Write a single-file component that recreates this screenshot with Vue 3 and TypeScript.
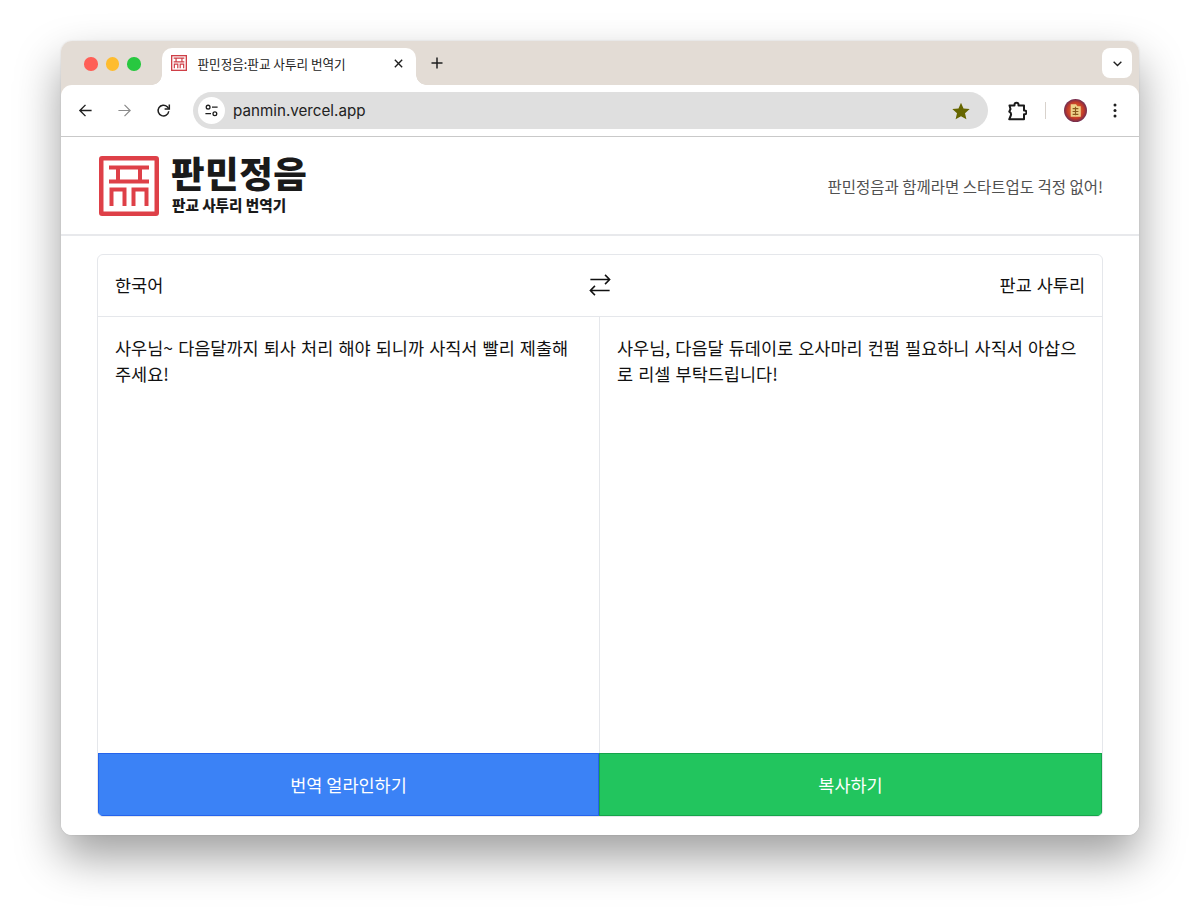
<script setup lang="ts">
const source = '사우님~ 다음달까지 퇴사 처리 해야 되니까 사직서 빨리 제출해 주세요!'
const target = '사우님, 다음달 듀데이로 오사마리 컨펌 필요하니 사직서 아삽으로 리셀 부탁드립니다!'
</script>

<template>
  <div class="stage">
    <div class="window">
      <div class="tabstrip">
        <div class="lights">
          <span class="light l-red"></span>
          <span class="light l-yellow"></span>
          <span class="light l-green"></span>
        </div>
        <div class="tab">
          <svg class="favicon" viewBox="0 0 60 60" aria-hidden="true">
            <rect x="2.500" y="2.500" width="55" height="55" fill="#fff" stroke="#cf3f47" stroke-width="5" />
            <path d="M10 12h40M10 26h40M19 12v14M41 12v14M12.500 50V34H25.500V50M34.500 50V34H47.500V50" fill="none" stroke="#cf3f47" stroke-width="4.500" />
          </svg>
          <span class="tab-title">판민정음:판교 사투리 번역기</span>
          <svg class="tab-close" viewBox="0 0 12 12" aria-hidden="true">
            <path d="M2 2l8 8M10 2l-8 8" stroke="#1f1f1f" stroke-width="1.500" fill="none" />
          </svg>
        </div>
        <svg class="new-tab" viewBox="0 0 12 12" aria-hidden="true">
          <path d="M6 0.500v11M0.500 6h11" stroke="#1f1f1f" stroke-width="1.500" fill="none" />
        </svg>
        <div class="tab-menu">
          <svg viewBox="0 0 12 12" aria-hidden="true">
            <path d="M1.800 4L6 8.200 10.200 4" stroke="#1f1f1f" stroke-width="1.500" fill="none" />
          </svg>
        </div>
      </div>

      <div class="toolbar">
        <svg class="nav" viewBox="0 0 16 16" aria-hidden="true">
          <path d="M14.500 8H2M8 2L2 8l6 6" stroke="#1f1f1f" stroke-width="1.500" fill="none" />
        </svg>
        <svg class="nav" viewBox="0 0 16 16" aria-hidden="true">
          <path d="M1.500 8H14M8 2l6 6-6 6" stroke="#8b8b8b" stroke-width="1.300" fill="none" />
        </svg>
        <svg class="nav" viewBox="0 0 16 16" aria-hidden="true">
          <path d="M13.600 8.800A5.700 5.700 0 1 1 12 4.100L13.600 6" stroke="#1f1f1f" stroke-width="1.600" fill="none" />
          <path d="M14.200 1.500v5H9.200" fill="none" stroke="#1f1f1f" stroke-width="1.600" />
        </svg>
        <div class="omnibox">
          <span class="site-chip">
            <svg viewBox="0 0 16 16" aria-hidden="true">
              <circle cx="4.400" cy="4.400" r="2" fill="none" stroke="#1f1f1f" stroke-width="1.400" />
              <path d="M8.500 4.400h6M1.500 11.400h6" stroke="#1f1f1f" stroke-width="1.400" fill="none" />
              <circle cx="11.600" cy="11.400" r="2" fill="none" stroke="#1f1f1f" stroke-width="1.400" />
            </svg>
          </span>
          <span class="url">panmin.vercel.app</span>
          <svg class="star" viewBox="0 0 18 18" aria-hidden="true">
            <path d="M9 .8l2.500 5.700 6.200.6-4.700 4.100 1.400 6.100L9 14.200l-5.400 3.100L5 11.200.3 7.100l6.200-.6z" fill="#666600" />
          </svg>
        </div>
        <svg class="ext" viewBox="0 0 20 20" aria-hidden="true">
          <path d="M2.500 4.500h5V3.800a2 2 0 0 1 4 0v.7h5.500v5h.6a1.900 1.900 0 0 1 0 3.800H17v5H2.200l1.600-3.800c.6-1.500.1-2.900-1.500-3.800L3.500 8z" fill="none" stroke="#1a1a1a" stroke-width="2" stroke-linejoin="round" />
        </svg>
        <span class="tool-sep"></span>
        <span class="avatar">
          <svg viewBox="0 0 24 24" aria-hidden="true">
            <defs>
              <radialGradient id="avatarGlow" cx="0.500" cy="0.500" r="0.550">
                <stop offset="0" stop-color="#ee8a2c" />
                <stop offset="0.650" stop-color="#c23a2a" />
                <stop offset="1" stop-color="#54295e" />
              </radialGradient>
            </defs>
            <circle cx="12" cy="12" r="12" fill="url(#avatarGlow)" />
            <path d="M7 5.500h5.500L14 7.500h3.500V18.500H7z" fill="#eed28a" />
            <path d="M9 10h6M9 13h6M9 16h6M12 8v9" stroke="#8a5a1e" stroke-width="1.200" fill="none" />
          </svg>
        </span>
        <svg class="dots" viewBox="0 0 4 16" aria-hidden="true">
          <circle cx="2" cy="2.200" r="1.600" fill="#1f1f1f" />
          <circle cx="2" cy="8" r="1.600" fill="#1f1f1f" />
          <circle cx="2" cy="13.800" r="1.600" fill="#1f1f1f" />
        </svg>
      </div>

      <div class="page">
        <header class="site-header">
          <div class="brand">
            <svg class="logo" viewBox="0 0 60 60" aria-hidden="true">
              <rect x="2.250" y="2.250" width="55.500" height="55.500" rx="0.800" fill="#fff" stroke="#de4048" stroke-width="4.500" />
              <path d="M10 11.500h40M10 25.500h40M19 11.500v14M41 11.500v14M12.500 50V33.500H25.500V50M34.500 50V33.500H47.500V50" fill="none" stroke="#de4048" stroke-width="4" />
            </svg>
            <div class="brand-text">
              <div class="brand-name">판민정음</div>
              <div class="brand-sub">판교 사투리 번역기</div>
            </div>
          </div>
          <p class="tagline">판민정음과 함께라면 스타트업도 걱정 없어!</p>
        </header>

        <main class="content">
          <section class="card">
            <div class="lang-row">
              <span>한국어</span>
              <svg class="swap" viewBox="0 0 24 24" aria-hidden="true">
                <path d="M1.500 7h21M17.500 2l5 5-5 5M22.500 19H1.500M6.500 14l-5 5 5 5" fill="none" stroke="#111" stroke-width="1.700" transform="translate(0 -1)" />
              </svg>
              <span class="lang-right">판교 사투리</span>
            </div>
            <div class="panes">
              <div class="pane">{{ source }}</div>
              <div class="pane">{{ target }}</div>
            </div>
            <div class="actions">
              <button class="action blue" type="button">번역 얼라인하기</button>
              <button class="action green" type="button">복사하기</button>
            </div>
          </section>
        </main>
      </div>
    </div>
  </div>
</template>

<style>
html, body { margin: 0; background: #fff; }
</style>

<style scoped>
.stage {
  width: 1200px;
  height: 916px;
  padding: 41px 61px 81px;
  box-sizing: border-box;
  overflow: hidden;
  font-family: "Inter", "Noto Sans CJK KR", sans-serif;
  color: #111;
}
.window {
  height: 794px;
  border-radius: 11px;
  background: #fff;
  overflow: hidden;
  display: flex;
  flex-direction: column;
  box-shadow: 0 0 2px rgba(0,0,0,.12), 0 22px 45px rgba(0,0,0,.38);
}
.tabstrip {
  height: 55px;
  padding-bottom: 11px;
  margin-bottom: -11px;
  box-sizing: border-box;
  flex: none;
  background: #e3dcd5;
  display: flex;
  align-items: flex-end;
  position: relative;
}
.lights { display: flex; gap: 8px; margin: 0 21px 0 23px; align-self: center; padding-top: 2px; }
.light { width: 13.500px; height: 13.500px; border-radius: 50%; }
.l-red { background: #ff5f57; }
.l-yellow { background: #febc2e; }
.l-green { background: #28c840; }
.tab {
  width: 254px;
  height: 37px;
  background: #fff;
  border-radius: 10px 10px 0 0;
  display: flex;
  align-items: center;
  padding: 0 10px 7px 9px;
  box-sizing: border-box;
  position: relative;
  z-index: 2;
}
.tab::before,
.tab::after {
  content: "";
  position: absolute;
  bottom: 0;
  width: 10px;
  height: 10px;
}
.tab::before {
  left: -10px;
  background: radial-gradient(circle at 0 0, transparent 9.500px, #fff 10px);
}
.tab::after {
  right: -10px;
  background: radial-gradient(circle at 100% 0, transparent 9.500px, #fff 10px);
}
.favicon { width: 16px; height: 16px; flex: none; }
.tab-title {
  margin-left: 11px;
  font-size: 12.600px;
  font-family: "Noto Sans CJK KR", sans-serif;
  color: #222;
  flex: 1;
  white-space: nowrap;
}
.tab-close { width: 11px; height: 11px; flex: none; margin-right: 2px; }
.new-tab { width: 12px; height: 12px; margin: 0 0 16px 15px; flex: none; }
.tab-menu {
  position: absolute;
  right: 7px;
  top: 7px;
  width: 30px;
  height: 30px;
  background: #fff;
  border-radius: 8px;
  display: flex;
  align-items: center;
  justify-content: center;
}
.tab-menu svg { width: 11px; height: 11px; }
.toolbar {
  height: 51px;
  flex: none;
  background: #fff;
  border-bottom: 1px solid #c9c9c9;
  display: flex;
  align-items: center;
  padding-left: 17px;
  border-radius: 11px 11px 0 0;
  position: relative;
  z-index: 1;
}
.nav { width: 15px; height: 15px; flex: none; margin-right: 24px; }
.omnibox {
  width: 795px;
  height: 37px;
  margin-left: -2px;
  border-radius: 19px;
  background: #dfdfdf;
  display: flex;
  align-items: center;
  padding: 0 18px 0 5px;
  box-sizing: border-box;
  flex: none;
}
.site-chip {
  width: 27px;
  height: 27px;
  background: #fff;
  border-radius: 50%;
  display: flex;
  align-items: center;
  justify-content: center;
  flex: none;
}
.site-chip svg { width: 15px; height: 15px; }
.url { margin-left: 8px; font-size: 15.200px; color: #222; flex: 1; font-family: "Inter", sans-serif; }
.star { width: 18px; height: 18px; flex: none; }
.ext { width: 20px; height: 20px; margin-left: 19px; flex: none; }
.tool-sep { width: 1px; height: 17px; background: #d8d2cc; margin-left: 18px; flex: none; }
.avatar { width: 23px; height: 23px; margin-left: 18px; flex: none; display: block; }
.avatar svg { width: 100%; height: 100%; display: block; }
.dots { width: 4px; height: 15px; margin-left: 26px; flex: none; }
.page { flex: 1; min-height: 0; display: flex; flex-direction: column; background: #fff; }
.site-header {
  height: 97px;
  flex: none;
  border-bottom: 2px solid #e8e9ec;
  display: flex;
  align-items: center;
  justify-content: space-between;
  padding: 0 36px 0 38px;
}
.brand { display: flex; align-items: center; gap: 12px; padding-top: 1px; }
.logo { width: 60px; height: 60px; display: block; flex: none; }
.brand-text { display: flex; flex-direction: column; font-family: "Noto Sans CJK KR", sans-serif; color: #1a1a1a; }
.brand-name { font-size: 36.500px; font-weight: 900; line-height: 40px; letter-spacing: 0.500px; margin-top: -5px; }
.brand-sub { font-size: 14.600px; font-weight: 900; line-height: 18px; margin-top: 3px; margin-left: 1px; }
.tagline { margin: 0; font-size: 15.500px; color: #505050; font-family: "Noto Sans CJK KR", sans-serif; }
.content { flex: 1; min-height: 0; padding: 18px 36px 18px; display: flex; }
.card {
  flex: 1;
  display: flex;
  flex-direction: column;
  border: 1px solid #e5e7eb;
  border-radius: 6px;
  overflow: hidden;
  font-family: "Noto Sans CJK KR", sans-serif;
}
.lang-row {
  height: 62px;
  flex: none;
  border-bottom: 1px solid #e5e7eb;
  display: grid;
  grid-template-columns: 1fr auto 1fr;
  align-items: center;
  padding: 0 17px 2px 17px;
  box-sizing: border-box;
  font-size: 17.500px;
  word-spacing: 1px;
  color: #111;
}
.lang-right { text-align: right; }
.swap { width: 22px; height: 22px; }
.panes { flex: 1; min-height: 0; display: grid; grid-template-columns: 501px 1fr; }
.pane {
  padding: 18px 17px;
  font-size: 17.500px;
  line-height: 26px;
  word-spacing: 1.200px;
  color: #111;
  word-break: break-all;
}
.pane + .pane { border-left: 1px solid #e5e7eb; padding: 18px 18px 18px 17px; }
.actions { height: 63px; flex: none; display: grid; grid-template-columns: 501px 1fr; }
.action {
  border: 0;
  color: #fff;
  font: inherit;
  font-size: 17.500px;
}
.blue { background: #3b82f6; border: 1px solid #2563eb; }
.green { background: #22c55e; border: 1px solid #16a34a; }
</style>
